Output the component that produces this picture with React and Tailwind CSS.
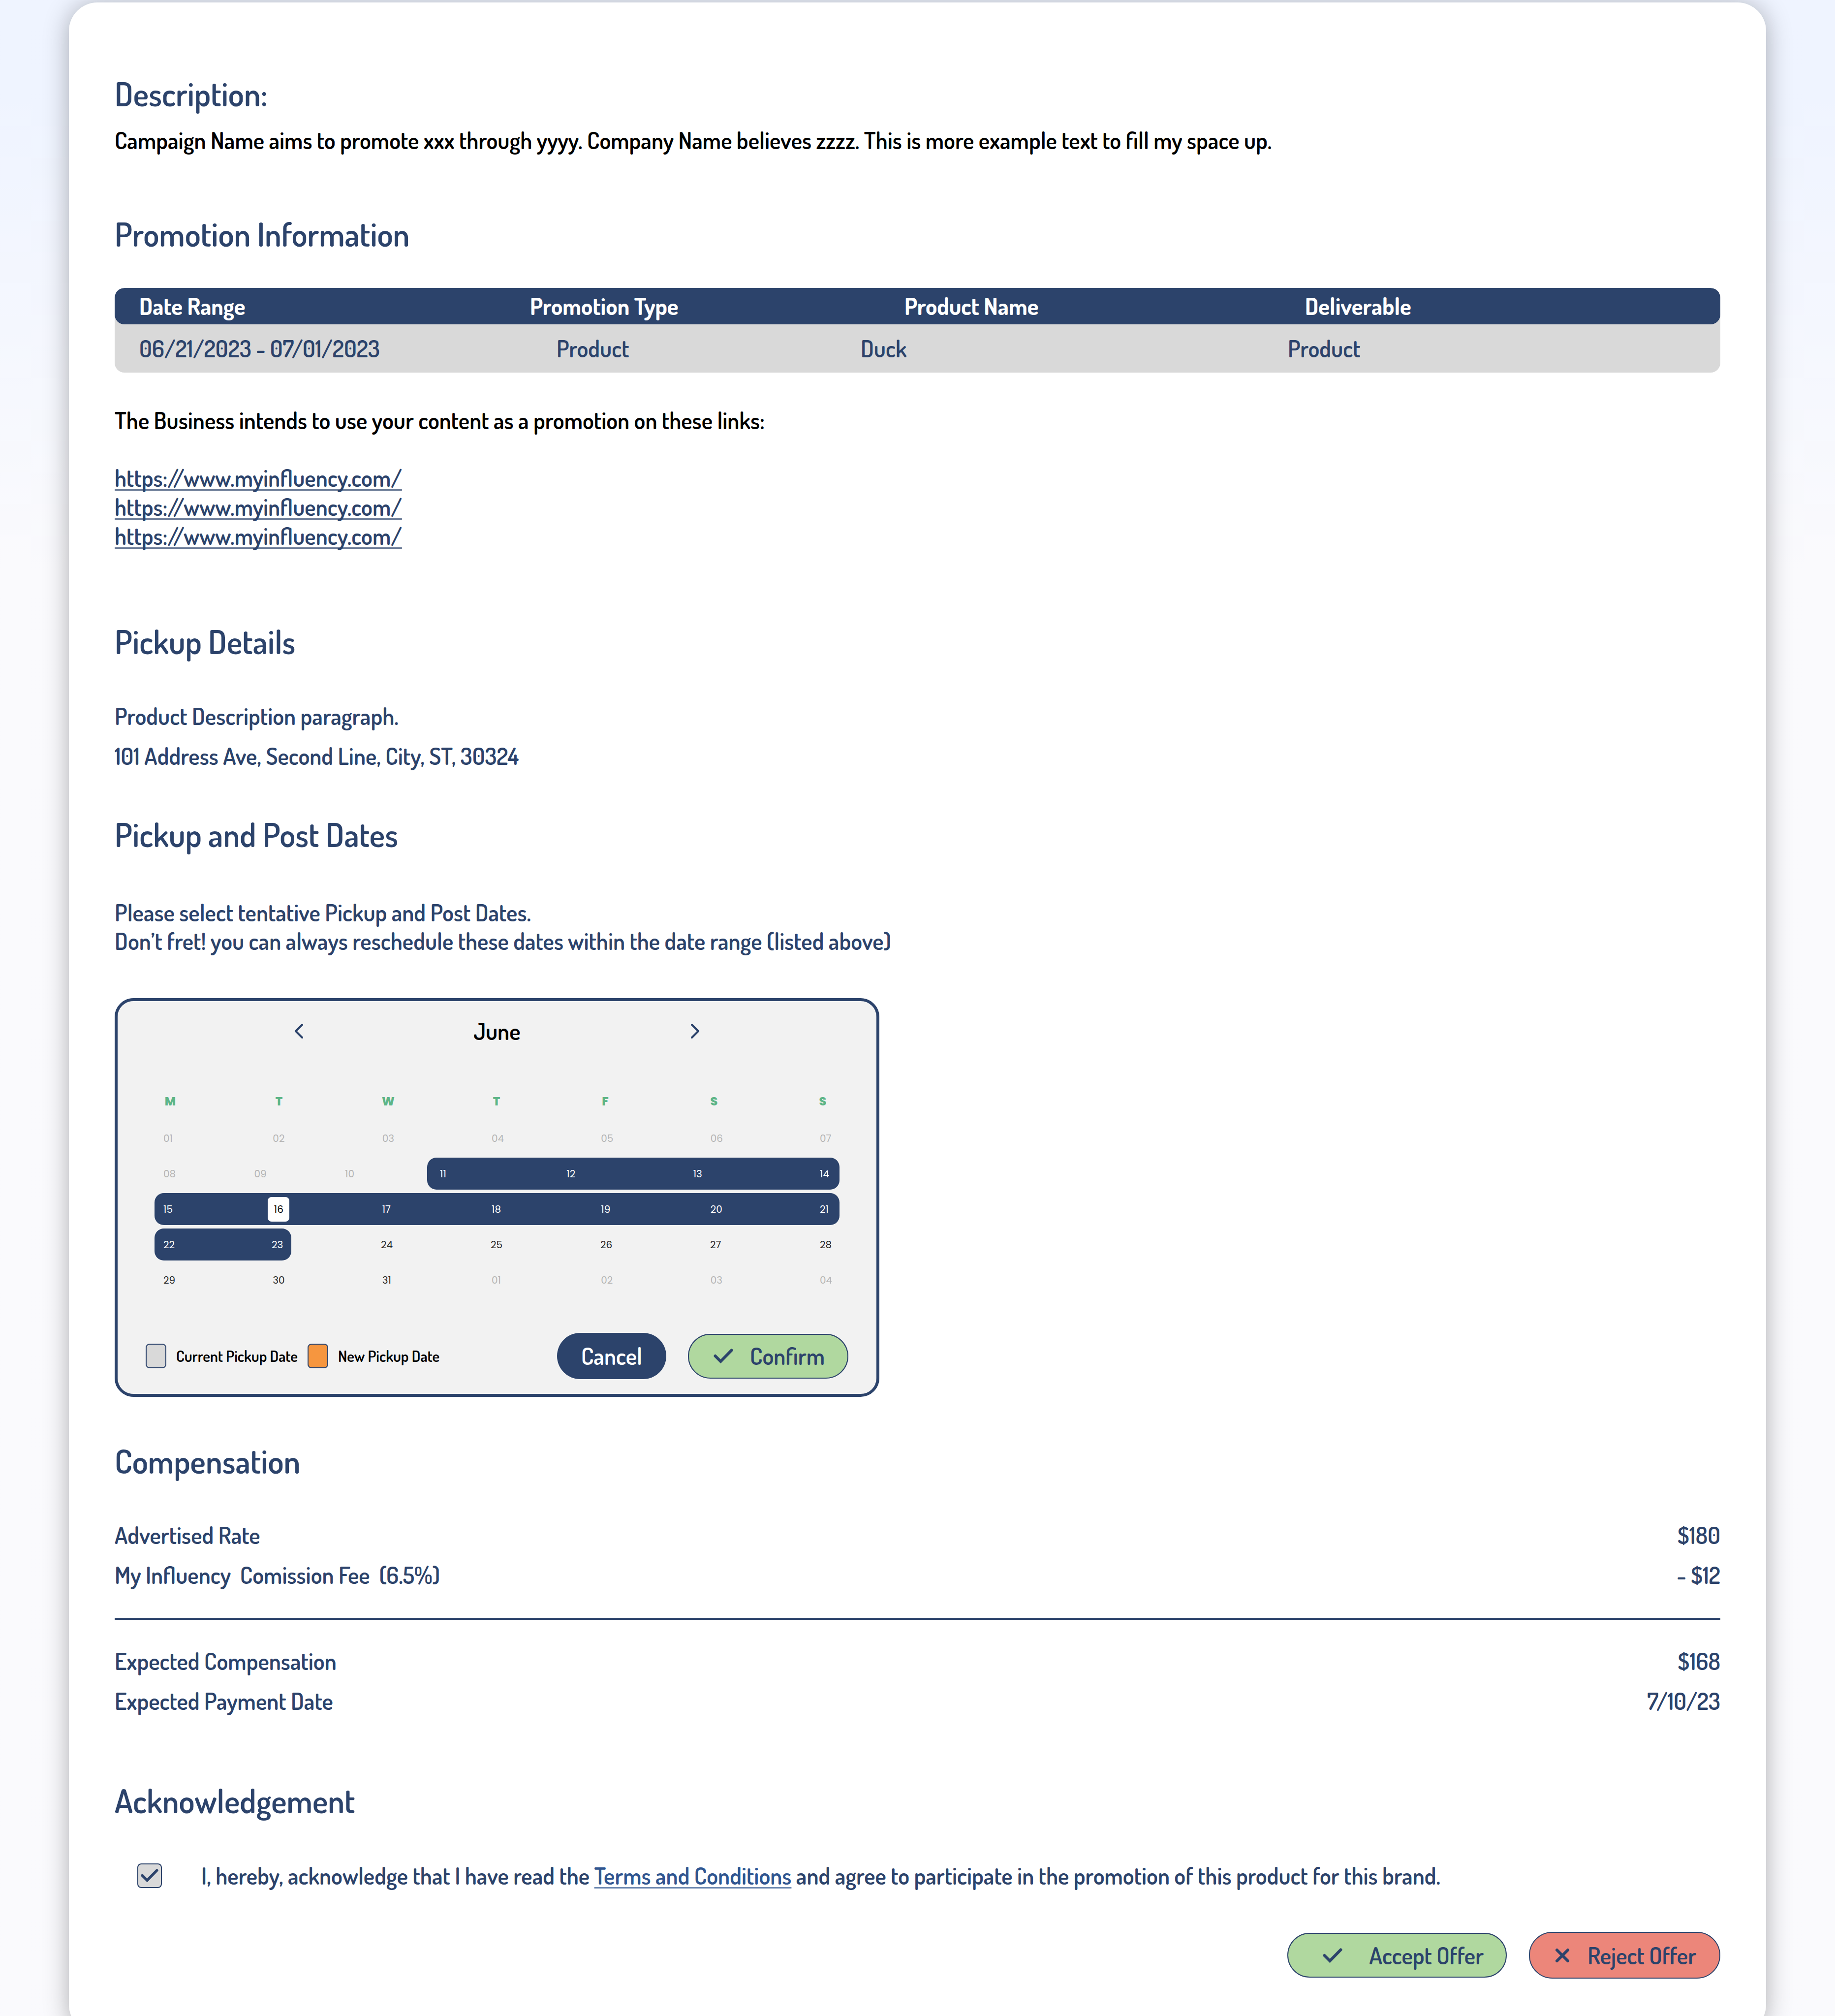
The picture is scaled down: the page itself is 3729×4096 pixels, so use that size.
const HEADING = "text-[66px] leading-[84px] font-semibold text-[#2c436b]";
const BODY = "text-[47px] leading-[58px] font-semibold";

const LINKS = [
  "https://www.myinfluency.com/",
  "https://www.myinfluency.com/",
  "https://www.myinfluency.com/",
];

const WEEKDAYS = ["M", "T", "W", "T", "F", "S", "S"];

function CheckIcon({ size = "h-[30px] w-[40px]", className = "" }) {
  return (
    <svg viewBox="0 0 40 30" className={size + " shrink-0 " + className} fill="none" stroke="#2c436b" strokeWidth="6" strokeLinecap="round" aria-hidden="true">
      <path d="M3.5 15 L14.5 26 L36.5 3.5" />
    </svg>
  );
}

function CrossIcon() {
  return (
    <svg viewBox="0 0 30 30" className="h-[30px] w-[30px] shrink-0" fill="none" stroke="#2c436b" strokeWidth="6" strokeLinecap="round" aria-hidden="true">
      <path d="M4 4 L26 26 M26 4 L4 26" />
    </svg>
  );
}

function Chevron({ d }) {
  return (
    <svg viewBox="0 0 20 30" className="h-[30px] w-[20px]" fill="none" stroke="#2c436b" strokeWidth="4" strokeLinecap="round" strokeLinejoin="round" aria-hidden="true">
      <path d={d} />
    </svg>
  );
}

const TONES = {
  muted: "text-[#b5b5b5]",
  dark: "text-[#262626]",
  light: "text-white",
};

function days(list, tone) {
  return list.map((d) => (
    <button key={d} type="button" className={"w-6 text-left leading-[30px] " + TONES[tone]}>
      {d}
    </button>
  ));
}

function Calendar() {
  return (
    <div className="w-[1554px] max-w-full rounded-[38px] border-[6px] border-[#2c436b] bg-[#f2f2f2] pt-8 pb-[30px]">
      <div className="mx-auto flex w-[826px] items-center justify-between">
        <button type="button" aria-label="Previous month">
          <Chevron d="M17 2 L4 15 L17 28" />
        </button>
        <h3 className={BODY + " text-black"}>June</h3>
        <button type="button" aria-label="Next month">
          <Chevron d="M3 2 L16 15 L3 28" />
        </button>
      </div>

      <div className="mx-[75px] mt-[99px] font-[Poppins,Inter,sans-serif] text-[20px]">
        <div className="flex justify-between pr-[22px] pl-5 text-[24px] leading-[30px] font-extrabold text-[#5db587]">
          {WEEKDAYS.map((d, i) => (
            <span key={i} className="w-6 text-center">
              {d}
            </span>
          ))}
        </div>
        <div className="mt-[27px] flex flex-col gap-[7px]">
          <div className="flex h-[65px] items-center justify-between pr-4 pl-[18px]">
            {days(["01", "02", "03", "04", "05", "06", "07"], "muted")}
          </div>
          <div className="flex h-[65px] items-center justify-between">
            <div className="flex w-[411px] justify-between pl-[18px]">{days(["08", "09", "10"], "muted")}</div>
            <div className="flex h-full w-[838px] items-center justify-between rounded-[19px] bg-[#2c436b] pr-4 pl-[26px]">
              {days(["11", "12", "13", "14"], "light")}
            </div>
          </div>
          <div className="flex h-[65px] items-center justify-between rounded-[19px] bg-[#2c436b] pr-4 pl-[18px]">
            {days(["15"], "light")}
            <button type="button" className="-mx-[10px] h-[50px] w-[44px] rounded-[8px] bg-white text-black">
              16
            </button>
            {days(["17", "18", "19", "20", "21"], "light")}
          </div>
          <div className="flex h-[65px] items-center">
            <div className="flex h-full w-[278px] items-center justify-between rounded-[19px] bg-[#2c436b] pr-4 pl-[18px]">
              {days(["22", "23"], "light")}
            </div>
            <div className="flex flex-1 justify-between pr-4 pl-[182px]">
              {days(["24", "25", "26", "27", "28"], "dark")}
            </div>
          </div>
          <div className="flex h-[65px] items-center justify-between pr-4 pl-[18px]">
            {days(["29", "30", "31"], "dark")}
            {days(["01", "02", "03", "04"], "muted")}
          </div>
        </div>
      </div>

      <div className="mt-[75px] flex items-center justify-between px-[57px]">
        <div className="flex items-center text-[31px] leading-[40px] font-semibold text-black">
          <span className="h-[50px] w-[42px] rounded-[8px] border-2 border-[#2c436b] bg-[#d9d9d9]" />
          <span className="ml-5">Current Pickup Date</span>
          <span className="ml-5 h-[50px] w-[42px] rounded-[8px] border-2 border-[#2c436b] bg-[#f6963f]" />
          <span className="ml-5">New Pickup Date</span>
        </div>
        <div className="flex items-center gap-11">
          <button type="button" className={BODY + " h-[94px] w-[222px] rounded-full bg-[#2c436b] text-white"}>
            Cancel
          </button>
          <button type="button" className={BODY + " flex h-[91px] w-[326px] items-center justify-between rounded-full border-2 border-[#2c436b] bg-[#b0d89f] pr-[46px] pl-[50px] text-[#2c436b]"}>
            <CheckIcon />
            Confirm
          </button>
        </div>
      </div>
    </div>
  );
}

function AmountRow({ label, value }) {
  return (
    <div className="flex justify-between whitespace-pre">
      <dt>{label}</dt>
      <dd>{value}</dd>
    </div>
  );
}

export default function App() {
  return (
    <main className="h-screen overflow-hidden bg-linear-to-b from-[#eff4ff] from-5% via-[#fafafd] via-28% to-[#fafafd] pt-[5px] font-[Dosis,Lato,sans-serif]">
      <div className="mx-[140px] rounded-[58px] bg-white px-[93px] pt-[143px] pb-[111px] shadow-[0_4px_52px_rgba(0,0,0,0.3)]">
        <section>
          <h2 className={HEADING}>Description:</h2>
          <p className={BODY + " mt-6 text-black"}>
            Campaign Name aims to promote xxx through yyyy. Company Name believes zzzz. This is more example text to fill my space up.
          </p>
        </section>

        <section className="mt-[119px]">
          <h2 className={HEADING}>Promotion Information</h2>
          <table className="mt-[68px] block overflow-hidden rounded-[20px] bg-[#d9d9d9] text-left text-[47px] leading-[58px]">
            <thead className="block">
              <tr className="grid h-[74px] grid-cols-[794fr_761fr_814fr_844fr] items-center rounded-[20px] bg-[#2c436b] pl-[50px] text-white">
                <th className="font-bold">Date Range</th>
                <th className="font-bold">Promotion Type</th>
                <th className="font-bold">Product Name</th>
                <th className="font-bold">Deliverable</th>
              </tr>
            </thead>
            <tbody className="block">
              <tr className="grid h-[98px] grid-cols-[848fr_618fr_868fr_879fr] items-center pl-[50px] font-semibold text-[#2c436b]">
                <td>06/21/2023 - 07/01/2023</td>
                <td>Product</td>
                <td>Duck</td>
                <td>Product</td>
              </tr>
            </tbody>
          </table>
          <p className={BODY + " mt-[68px] text-black"}>The Business intends to use your content as a promotion on these links:</p>
          <ul className="mt-[58px] text-[47px] leading-[59px] font-semibold text-[#2c436b]">
            {LINKS.map((url, i) => (
              <li key={i}>
                <a href={url} className="underline decoration-[#2c436b]/70 decoration-[3px] underline-offset-[5px] [text-decoration-skip-ink:none]">
                  {url}
                </a>
              </li>
            ))}
          </ul>
        </section>

        <section className="mt-[143px]">
          <h2 className={HEADING}>Pickup Details</h2>
          <div className={BODY + " mt-[81px] flex flex-col gap-[23px] text-[#2c436b]"}>
            <p>Product Description paragraph.</p>
            <p>101 Address Ave, Second Line, City, ST, 30324</p>
          </div>
        </section>

        <section className="mt-[88px]">
          <h2 className={HEADING}>Pickup and Post Dates</h2>
          <p className={BODY + " mt-[88px] mb-[87px] text-[#2c436b]"}>
            Please select tentative Pickup and Post Dates.
            <br />
            Don’t fret! you can always reschedule these dates within the date range (listed above)
          </p>
          <Calendar />
        </section>

        <section className="mt-[88px]">
          <h2 className={HEADING}>Compensation</h2>
          <dl className={BODY + " mt-[80px] flex flex-col gap-[23px] text-[#2c436b]"}>
            <AmountRow label="Advertised Rate" value="$180" />
            <AmountRow label="My Influency  Comission Fee  (6.5%)" value="- $12" />
          </dl>
          <hr className="mt-[58px] mb-[55px] border-t-4 border-[#2c436b]" />
          <dl className={BODY + " flex flex-col gap-[23px] text-[#2c436b]"}>
            <AmountRow label="Expected Compensation" value="$168" />
            <AmountRow label="Expected Payment Date" value="7/10/23" />
          </dl>
        </section>

        <section className="mt-[131px]">
          <h2 className={HEADING}>Acknowledgement</h2>
          <div className={BODY + " mt-[82px] flex items-center gap-[80px] pl-[46px] text-[#2c436b]"}>
            <span className="relative flex h-[50px] w-[50px]">
              <input id="acknowledge" type="checkbox" defaultChecked className="peer h-[50px] w-[50px] appearance-none rounded-[8px] border-2 border-[#2c436b] bg-[#d9d9d9]" />
              <CheckIcon size="h-[27px] w-[36px]" className="pointer-events-none absolute top-[11px] left-[7px] hidden peer-checked:block" />
            </span>
            <label htmlFor="acknowledge">
              I, hereby, acknowledge that I have read the{" "}
              <a href="#terms" className="text-[#2f5590] underline decoration-[#2f5590]/70 decoration-[3px] underline-offset-[5px] [text-decoration-skip-ink:none]">
                Terms and Conditions
              </a>{" "}
              and agree to participate in the promotion of this product for this brand.
            </label>
          </div>
          <div className="mt-[85px] flex items-center justify-end gap-[45px]">
            <button type="button" className={BODY + " flex h-[91px] w-[446px] items-center justify-between rounded-full border-2 border-[#2c436b] bg-[#b0d89f] pr-[45px] pl-[70px] text-[#2c436b]"}>
              <CheckIcon />
              Accept Offer
            </button>
            <button type="button" className={BODY + " flex h-[95px] w-[389px] items-center justify-between rounded-full border-2 border-[#2c436b] bg-[#ec867a] pr-[47px] pl-[51px] text-[#2c436b]"}>
              <CrossIcon />
              Reject Offer
            </button>
          </div>
        </section>
      </div>
    </main>
  );
}
